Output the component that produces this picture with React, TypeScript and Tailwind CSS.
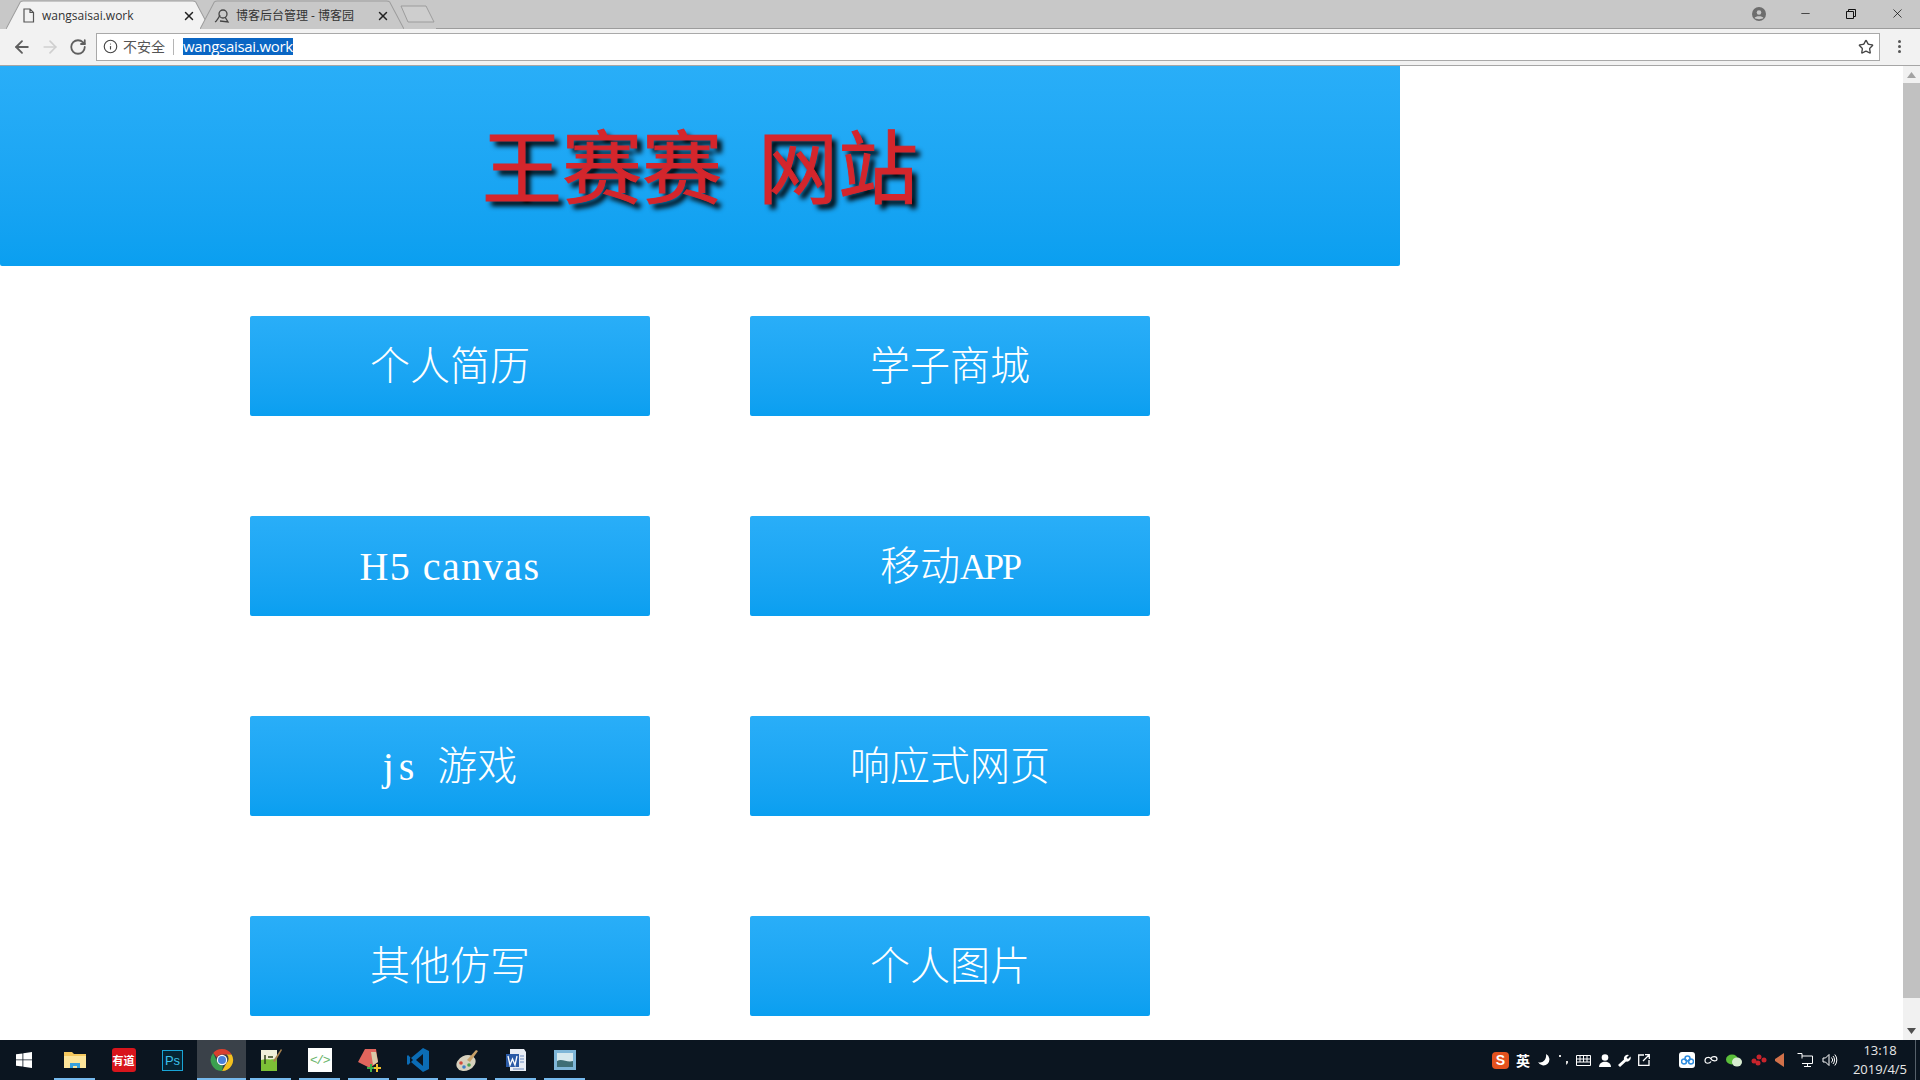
import React from "react";
import { ArrowLeft, ArrowRight, RotateCw, Info, Star, X, Minus } from "lucide-react";

const ui = "font-['Open_Sans','Noto_Sans_CJK_SC',sans-serif]";
const serif = "font-['Liberation_Serif','Noto_Sans_CJK_SC',serif]";

function TabShape({ fill, stroke }: { fill: string; stroke: string }) {
  return (
    <svg className="absolute inset-0 w-full h-full" viewBox="0 0 200 29" preserveAspectRatio="none">
      <path d="M0 29 L14 2 Q15 1 17 1 L183 1 Q185 1 186 2 L200 29" fill={fill} stroke={stroke} strokeWidth="1" />
    </svg>
  );
}

function Tab({ active, icon, title }: { active?: boolean; icon: React.ReactNode; title: string }) {
  return (
    <div className="relative w-[204px] h-[29px] -mr-[10px] shrink-0">
      <TabShape fill={active ? "#f2f2f2" : "#c8c8c8"} stroke="#9c9c9c" />
      <div className="relative flex items-center h-full pl-[16px] pr-[14px] pt-[2px]">
        <span className="w-[20px] flex items-center shrink-0">{icon}</span>
        <span className={`flex-1 text-[12px] text-[#333] whitespace-nowrap ${ui}`}>{title}</span>
        <X size={14} strokeWidth={2.5} className="text-[#222]" />
      </div>
    </div>
  );
}

function Slot({ on, hover, children }: { on?: boolean; hover?: boolean; children?: React.ReactNode }) {
  return (
    <div className={`relative w-[49px] h-[40px] flex items-center justify-center ${hover ? "bg-[#3a4149]" : ""}`}>
      {children}
      {on && <div className={`absolute bottom-0 h-[2px] bg-[#76b9ed] ${hover ? "inset-x-0" : "inset-x-[4px]"}`} />}
    </div>
  );
}

type Btn = { t: string; c?: string; e?: string; l?: string };
const rows: Btn[] = [
  { t: "个人简历" },
  { t: "学子商城" },
  { t: "H5 canvas", c: "tracking-[1.500px] whitespace-pre" },
  { t: "移动", e: "APP" },
  { t: "游戏", l: "js " },
  { t: "响应式网页" },
  { t: "其他仿写" },
  { t: "个人图片" },
];

function Chrome() {
  return (
    <svg width="24" height="24" viewBox="0 0 24 24">
      <path d="M12 1a11 11 0 0 1 9.600 5.500H12a5.500 5.500 0 0 0-5 3L3.200 5A11 11 0 0 1 12 1z" fill="#d8402f" />
      <path d="M21.600 6.500A11 11 0 0 1 12 23l4.700-8.200a5.500 5.500 0 0 0 0-8.300z" fill="#f3c01f" />
      <path d="M12 23A11 11 0 0 1 3.200 5L7.500 14.600a5.500 5.500 0 0 0 5.500 3z" fill="#3ba04f" />
      <circle cx="12" cy="12" r="5.200" fill="#fff" />
      <circle cx="12" cy="12" r="4" fill="#4a80d8" />
    </svg>
  );
}

export default function App() {
  return (
    <div className="w-[1920px] h-[1080px] flex flex-col overflow-hidden bg-white">
      {/* tab strip */}
      <div className="h-[29px] bg-[#c8c8c8] flex items-end pl-[6px] relative shrink-0">
        <Tab
          active
          title="wangsaisai.work"
          icon={
            <svg width="13" height="15" viewBox="0 0 13 15" fill="none" stroke="#555" strokeWidth="1.200">
              <path d="M2 1h6l3.500 3.500V14H2zM8 1v3.500h3.500" />
            </svg>
          }
        />
        <Tab
          title="博客后台管理 - 博客园"
          icon={
            <svg className="-ml-[2px]" width="16" height="16" viewBox="0 0 16 16" fill="none" stroke="#444" strokeWidth="1.300">
              <circle cx="9" cy="6" r="4" />
              <path d="M1 14c2-1 4-5 5-7M6 13l8 1-3-5" />
            </svg>
          }
        />
        <svg className="ml-[6px] mb-[6px]" width="36" height="18" viewBox="0 0 36 18">
          <path d="M1 1H26L34 17H8z" fill="#cecece" stroke="#9c9c9c" />
        </svg>
        <div className="flex-1 h-[1px] bg-[#9c9c9c]" />
        <div className="absolute right-0 top-0 h-[27px] flex items-center">
          <svg className="mr-[16px]" width="14" height="14" viewBox="0 0 14 14">
            <circle cx="7" cy="7" r="7" fill="#6d6d6d" />
            <circle cx="7" cy="5.500" r="2.300" fill="#c8c8c8" />
            <path d="M2.500 11c1-2.200 8-2.200 9 0-1.500 1.500-7.500 1.500-9 0z" fill="#c8c8c8" />
          </svg>
          <div className="w-[46px] flex justify-center">
            <Minus size={13} strokeWidth={1.200} className="text-black" />
          </div>
          <div className="w-[46px] flex justify-center">
            <svg width="10" height="10" viewBox="0 0 10 10" fill="none" stroke="#111">
              <path d="M.5 2.500h7v7h-7zM2.500 2.500v-2h7v7h-2" />
            </svg>
          </div>
          <div className="w-[46px] flex justify-center">
            <X size={15} strokeWidth={1.100} className="text-black" />
          </div>
        </div>
      </div>

      {/* toolbar */}
      <div className="h-[37px] bg-[#f2f2f2] border-b border-[#a6a6a6] flex items-center shrink-0 pb-[1px]">
        <div className="w-[96px] flex items-center pl-[12px] gap-[8px]">
          <ArrowLeft size={20} strokeWidth={2.200} className="text-[#5f5f5f]" />
          <ArrowRight size={20} strokeWidth={2} className="text-[#cfcfcf]" />
          <RotateCw size={18} strokeWidth={2.400} className="text-[#5f5f5f] ml-[1px]" />
        </div>
        <div className={`w-[1784px] h-[28px] bg-white border border-[#a9a9a9] flex items-center pl-[6px] ${ui}`}>
          <Info size={15} strokeWidth={1.800} className="text-[#444]" />
          <span className="ml-[5px] text-[14px] text-[#555] font-['Noto_Sans_CJK_SC',sans-serif]">不安全</span>
          <span className="ml-[8px] w-px h-[16px] bg-[#b5b5b5]" />
          <span className="ml-[9px] bg-[#0a66c4] text-white text-[15px] leading-[17px] tracking-[-.3px]">wangsaisai.work</span>
          <Star size={16} strokeWidth={2} className="ml-auto mr-[5px] text-[#444]" />
        </div>
        <div className="flex-1 flex flex-col items-center gap-[2px] pr-[2px]">
          <span className="w-[3px] h-[3px] rounded-full bg-[#555]" />
          <span className="w-[3px] h-[3px] rounded-full bg-[#555]" />
          <span className="w-[3px] h-[3px] rounded-full bg-[#555]" />
        </div>
      </div>

      {/* page */}
      <div className="flex-1 flex min-h-0">
        <div className="flex-1 min-w-0">
          <div className="w-[1400px] h-[200px] rounded-b-[2px] bg-gradient-to-b from-[#29aef8] to-[#0a9ff0] flex items-center justify-center pb-[9px]">
            <h1 className="text-[80px] leading-none font-normal text-[#d4262c] [-webkit-text-stroke:1px_#d4262c] [text-shadow:5px_5px_5px_#000] whitespace-pre font-['Noto_Sans_CJK_SC',sans-serif]">
              王赛赛  网站
            </h1>
          </div>
          <div className={`grid grid-cols-[400px_400px] gap-x-[100px] gap-y-[100px] pl-[250px] pt-[50px] font-light text-white ${serif}`}>
            {rows.map((b) => (
              <a
                key={b.t}
                className={`h-[100px] rounded-[2px] bg-gradient-to-b from-[#29aef8] to-[#0a9ff0] flex items-center justify-center pt-[2px] text-[40px] ${b.c ?? ""}`}
              >
                {b.l && <span className="whitespace-pre tracking-[5px] [word-spacing:3px]">{b.l}</span>}
                {b.t}
                {b.e && <span className="text-[36px] tracking-[-2px]">{b.e}</span>}
              </a>
            ))}
          </div>
        </div>
        {/* scrollbar */}
        <div className="w-[17px] bg-[#f1f1f1] flex flex-col items-center shrink-0">
          <svg className="mt-[6px] mb-[5px]" width="9" height="6" viewBox="0 0 9 6"><path d="M4.500 0L9 6H0z" fill="#a3a3a3" /></svg>
          <div className="w-full h-[915px] bg-[#c1c1c1]" />
          <svg className="mt-auto mb-[6px]" width="9" height="6" viewBox="0 0 9 6"><path d="M4.500 6L9 0H0z" fill="#505050" /></svg>
        </div>
      </div>

      {/* taskbar */}
      <div className="h-[40px] bg-[#0b1520] flex items-center shrink-0 text-white">
        <div className="w-[50px] flex justify-center pr-[2px]">
          <svg width="16" height="16" viewBox="0 0 16 16" fill="#fff">
            <path d="M0 2.300L6.500 1.400V7.500H0zM7.300 1.300L16 0V7.500H7.300zM0 8.300H6.500V14.600L0 13.700zM7.300 8.300H16V16L7.300 14.700z" />
          </svg>
        </div>
        <Slot on>
          <svg width="22" height="20" viewBox="0 0 22 20">
            <path d="M0 2h8l2 2h12v14H0z" fill="#f5c85e" />
            <path d="M0 6h22v12H0z" fill="#fde49a" />
            <path d="M6 18v-5h10v5h-3v-2H9v2z" fill="#3aa0dc" />
          </svg>
        </Slot>
        <Slot>
          <div className="w-[24px] h-[24px] rounded-[3px] bg-[#d8151c] flex items-center justify-center text-[11px] font-bold leading-none font-['Noto_Sans_CJK_SC',sans-serif] whitespace-nowrap">
            有道
          </div>
        </Slot>
        <Slot>
          <div className="w-[21px] h-[21px] border-[1.5px] border-[#19a4d6] bg-[#062433] flex items-center justify-center text-[13px] text-[#3cc2ec] leading-none font-['Liberation_Sans',sans-serif]">
            Ps
          </div>
        </Slot>
        <Slot on hover>
          <Chrome />
        </Slot>
        <Slot on>
          <svg width="24" height="24" viewBox="0 0 24 24">
            <path d="M2 2h16v21H2z" fill="#f1efd8" />
            <path d="M2 12c5-2 10 1 16-2v13H2z" fill="#7cc036" />
            <path d="M6 7v9M9 9h5" stroke="#30401a" strokeWidth="1.500" />
            <path d="M14 13L22 1l1 1-7 12z" fill="#a9834e" />
          </svg>
        </Slot>
        <Slot on>
          <div className="w-[24px] h-[24px] bg-white flex items-center justify-center text-[13px] text-[#6ab56b] font-['Liberation_Mono',monospace] leading-none tracking-[-1.5px]">
            {"</>"}
          </div>
        </Slot>
        <Slot on>
          <svg width="24" height="24" viewBox="0 0 24 24">
            <path d="M8 1h11l2 13-8 6L1 14z" fill="#e0655d" />
            <path d="M14 4h5l2 10-5 3z" fill="#d9c8a8" />
            <path d="M10 19h3v-3h2v3h3v2h-3v3h-2v-3h-3z" fill="#3fae49" />
            <path d="M17 19h2v-3h2v3h3v2h-3v3h-2v-3h-2z" fill="#f2c12e" />
          </svg>
        </Slot>
        <Slot on>
          <svg width="22" height="24" viewBox="0 0 22 24">
            <path d="M16 0L22 3v18l-6 3L4 14l-3 3-1-1v-8l1-1 3 3z" fill="#0b6cb5" />
            <path d="M16 6L9 12l7 6z" fill="#0b1520" />
            <path d="M3 9l3 3-3 3z" fill="#0b1520" />
          </svg>
        </Slot>
        <Slot on>
          <svg width="24" height="24" viewBox="0 0 24 24">
            <ellipse cx="11" cy="15" rx="10" ry="7.500" transform="rotate(-25 11 15)" fill="#d6d0bd" />
            <circle cx="6" cy="15" r="1.800" fill="#d04a3c" />
            <circle cx="9" cy="19" r="1.800" fill="#3d80c8" />
            <circle cx="14" cy="17" r="1.800" fill="#4aa04e" />
            <path d="M12 12L21 2l2 1-8 11z" fill="#c7a068" />
          </svg>
        </Slot>
        <Slot on>
          <svg width="22" height="24" viewBox="0 0 22 24">
            <path d="M5 1h14l2 3v19H5z" fill="#e9edf4" />
            <path d="M1 6h13v13H1z" fill="#2a5aa6" />
            <path d="M3 8l2 9 2.500-6 2.500 6 2-9" stroke="#fff" strokeWidth="1.300" fill="none" />
            <path d="M15 8h4M15 11h4M15 14h4M8 21h11" stroke="#6d8cc0" strokeWidth="1.200" />
          </svg>
        </Slot>
        <Slot on>
          <svg width="22" height="22" viewBox="0 0 22 22">
            <path d="M0 1h22v20H0z" fill="#7fb6d8" />
            <path d="M3 4h16v14H3z" fill="#d6e8ee" />
            <path d="M3 12c5-3 10 2 16 0v6H3z" fill="#3f6e75" />
          </svg>
        </Slot>

        {/* tray */}
        <div className="ml-auto flex items-center h-full pr-[4px]">
          <div className="w-[17px] h-[17px] rounded-[4px] bg-[#e4521e] flex items-center justify-center text-[14px] font-bold leading-none font-['Liberation_Sans',sans-serif]">S</div>
          <span className="ml-[7px] w-[14px] text-[14px] font-bold leading-none font-['Noto_Sans_CJK_SC',sans-serif]">英</span>
          <svg className="ml-[8px]" width="12" height="12" viewBox="0 0 12 12"><path d="M8 0a6 6 0 1 1-8 8c4 2 9-2 8-8z" fill="#fff" /></svg>
          <svg className="ml-[9px]" width="9" height="10" viewBox="0 0 9 10" fill="#ddd"><rect x="0" y="0" width="2" height="2" /><path d="M7 6h2v2L7 10z" /></svg>
          <svg className="ml-[8px]" width="15" height="11" viewBox="0 0 15 11" fill="none" stroke="#fff"><path d="M.5.500h14v10H.5zM.5 4h14M.5 7h14M4 .5v6.500M7.500 .5v6.500M11 .5v6.500" /></svg>
          <svg className="ml-[8px]" width="12" height="13" viewBox="0 0 12 13" fill="#fff"><circle cx="6" cy="3.500" r="3.300" /><path d="M0 13c0-7 12-7 12 0z" /></svg>
          <svg className="ml-[7px]" width="13" height="13" viewBox="0 0 13 13" fill="#fff"><path d="M0 11L6 5.500A3.800 3.800 0 0 1 11 1L8.500 3.500 10 5l2.500-2.500A3.800 3.800 0 0 1 8 7.500L2 13z" /></svg>
          <svg className="ml-[7px]" width="12" height="12" viewBox="0 0 12 12" fill="none" stroke="#fff" strokeWidth="1.300"><path d="M6 1H.7v10.300H11V6M7 .7h4.300V5M11 1L5 7" /></svg>

          <div className="ml-[29px] w-[16px] h-[16px] rounded-[3px] bg-white flex items-center justify-center">
            <svg width="13" height="10" viewBox="0 0 13 10" fill="none" stroke="#2f8de0" strokeWidth="1.500"><circle cx="6.500" cy="3.500" r="2.500" /><circle cx="3" cy="6.500" r="2.500" /><circle cx="10" cy="6.500" r="2.500" /></svg>
          </div>
          <svg className="ml-[9px]" width="14" height="10" viewBox="0 0 14 10" fill="none" stroke="#fff" strokeWidth="1.200"><path d="M7 6.500C6 8.500 1 9.500 1 5.500S6 2 7 4s6 3 6 0-5-3-6-.5" /></svg>
          <svg className="ml-[8px]" width="16" height="13" viewBox="0 0 16 13"><ellipse cx="6" cy="5.500" rx="6" ry="5" fill="#5bbf3a" /><ellipse cx="11" cy="8" rx="5" ry="4.500" fill="#d8ecd0" /></svg>
          <svg className="ml-[9px]" width="16" height="12" viewBox="0 0 16 12" fill="#c8242c"><circle cx="3" cy="7" r="2.500" /><circle cx="8" cy="3" r="2.500" /><circle cx="13" cy="6" r="2.500" /><circle cx="7" cy="9" r="2.500" /></svg>
          <svg className="ml-[8px]" width="10" height="14" viewBox="0 0 10 14"><path d="M9 0v14L0 8V6z" fill="#d2714a" /></svg>
          <svg className="ml-[12px]" width="16" height="14" viewBox="0 0 16 14" fill="none" stroke="#fff"><path d="M.5 .5h4.500v5M5 3h10.500v7.500H5M10.500 10.500v3M7 13.500h7" /></svg>
          <svg className="ml-[9px]" width="16" height="14" viewBox="0 0 16 14" fill="none" stroke="#fff"><path d="M1 5h2.500L7 1.500v11L3.500 9H1zM9.500 4.500a3.500 3.500 0 0 1 0 5M11 3a6 6 0 0 1 0 8M12.800 1.500a8.500 8.500 0 0 1 0 11" /></svg>
          <div className={`ml-[13px] w-[58px] flex flex-col items-center text-[13px] leading-[19px] text-[#e8e8e8] ${ui}`}>
            <span>13:18</span>
            <span>2019/4/5</span>
          </div>
          <div className="ml-[6px] w-px h-full bg-[#56606a]" />
        </div>
      </div>
    </div>
  );
}
